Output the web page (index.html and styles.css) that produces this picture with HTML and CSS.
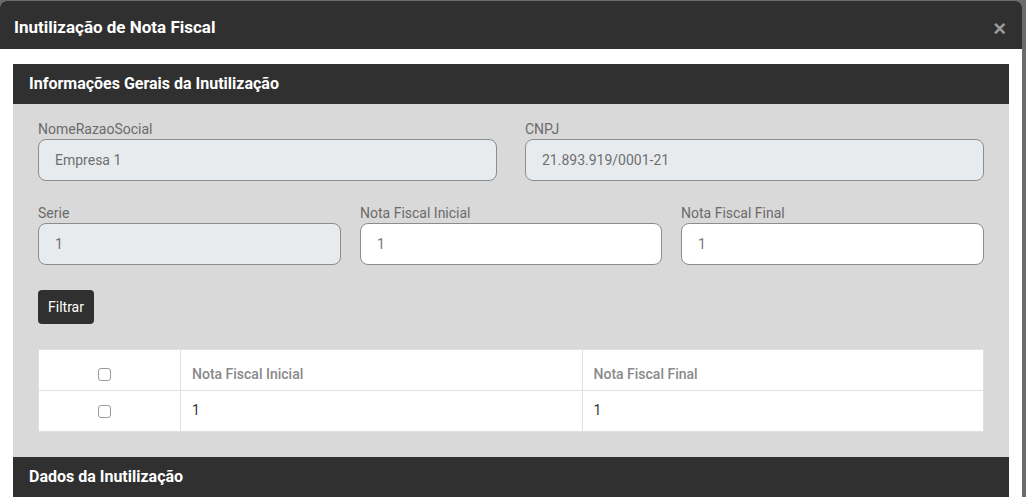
FILE: index.html
```html
<!DOCTYPE html>
<html lang="pt-BR">
<head>
    <meta charset="UTF-8">
    <meta name="viewport" content="width=device-width, initial-scale=1.0">
    <title>Inutilização de Nota Fiscal</title>
    <link rel="stylesheet" href="styles.css">
</head>
<body>
    <div class="modal">
        <div class="modal-header">
            <h1>Inutilização de Nota Fiscal</h1>
            <button type="button" class="close">&times;</button>
        </div>

        <div class="modal-body">
            <div class="section-title">Informações Gerais da Inutilização</div>
            <div class="section-body">
                <div class="row row-2">
                    <div class="field">
                        <label for="nome">NomeRazaoSocial</label>
                        <input type="text" id="nome" value="Empresa 1" disabled>
                    </div>
                    <div class="field">
                        <label for="cnpj">CNPJ</label>
                        <input type="text" id="cnpj" value="21.893.919/0001-21" disabled>
                    </div>
                </div>

                <div class="row row-3">
                    <div class="field">
                        <label for="serie">Serie</label>
                        <input type="text" id="serie" value="1" disabled>
                    </div>
                    <div class="field">
                        <label for="nfInicial">Nota Fiscal Inicial</label>
                        <input type="text" id="nfInicial" value="1">
                    </div>
                    <div class="field">
                        <label for="nfFinal">Nota Fiscal Final</label>
                        <input type="text" id="nfFinal" value="1">
                    </div>
                </div>

                <button type="button" class="btn-filtrar">Filtrar</button>

                <table class="grid">
                    <thead>
                        <tr>
                            <th class="col-check"><input type="checkbox"></th>
                            <th>Nota Fiscal Inicial</th>
                            <th>Nota Fiscal Final</th>
                        </tr>
                    </thead>
                    <tbody>
                        <tr>
                            <td class="col-check"><input type="checkbox"></td>
                            <td>1</td>
                            <td>1</td>
                        </tr>
                    </tbody>
                </table>
            </div>

            <div class="section-title">Dados da Inutilização</div>
        </div>
    </div>
</body>
</html>
```

FILE: styles.css
```css
* {
    margin: 0;
    padding: 0;
    box-sizing: border-box;
}

body {
    font-family: Roboto, "Liberation Sans", sans-serif;
    background-color: #6a6a6a;
    overflow: hidden;
}

.modal {
    margin-top: 1px;
    width: 1022px;
    height: 520px;
    background-color: white;
    border-radius: 6px 6px 0 0;
    overflow: hidden;
}

.modal-header {
    height: 48px;
    background-color: #303030;
    display: flex;
    justify-content: space-between;
    align-items: center;
    padding: 3px 16px 0 14px;
}

.modal-header h1 {
    font-size: 17px;
    font-weight: 700;
    color: white;
}

.close {
    background: none;
    border: none;
    color: #9a9a9a;
    font-family: Arial, "Liberation Sans", sans-serif;
    font-size: 22px;
    font-weight: 700;
    line-height: 1;
    margin-top: 4px;
    cursor: pointer;
}

.modal-body {
    padding: 15px 13px 0;
}

.section-title {
    height: 40px;
    line-height: 40px;
    padding: 0 16px;
    background-color: #303030;
    color: white;
    font-size: 16px;
    font-weight: 700;
}

.section-body {
    background-color: #d9d9d9;
    padding: 16px 25px 25px;
}

.row {
    display: grid;
    margin-bottom: 23px;
}

.row-2 {
    grid-template-columns: 1fr 1fr;
    column-gap: 28px;
}

.row-3 {
    grid-template-columns: 303px 302px 303px;
    column-gap: 19px;
    margin-bottom: 25px;
}

.field label {
    display: block;
    font-size: 14px;
    line-height: 18px;
    color: #6b6b6b;
    margin-bottom: 1px;
}

.field input {
    display: block;
    width: 100%;
    height: 42px;
    padding: 0 16px;
    border: 1px solid #8c8c8c;
    border-radius: 8px;
    background-color: white;
    font-family: Roboto, "Liberation Sans", sans-serif;
    font-size: 14px;
    color: #7a7a7a;
}

.field input:disabled {
    background-color: #e8ebee;
    color: #6f6f6f;
}

.btn-filtrar {
    display: block;
    height: 34px;
    padding: 0 10px;
    background-color: #303030;
    color: white;
    border: none;
    border-radius: 4px;
    font-family: Roboto, "Liberation Sans", sans-serif;
    font-size: 14px;
    cursor: pointer;
}

.grid {
    margin-top: 25px;
    width: 946px;
    border-collapse: collapse;
    background-color: white;
    border: 1px solid #e2e5e9;
    table-layout: fixed;
}

.grid th,
.grid td {
    height: 41px;
    padding: 0 11px;
    border: 1px solid #dde1e5;
    text-align: left;
    font-size: 14px;
}

.grid th {
    font-weight: 500;
    color: #8a8a8a;
    padding-top: 7px;
}

.grid td {
    color: #333;
    padding-bottom: 2px;
}

.grid .col-check {
    width: 142px;
    text-align: center;
    padding-left: 2px;
    padding-right: 12px;
}

.grid input[type="checkbox"] {
    appearance: none;
    width: 13px;
    height: 13px;
    border: 1px solid #9a9a9a;
    border-radius: 3px;
    background-color: white;
    vertical-align: middle;
}
```
